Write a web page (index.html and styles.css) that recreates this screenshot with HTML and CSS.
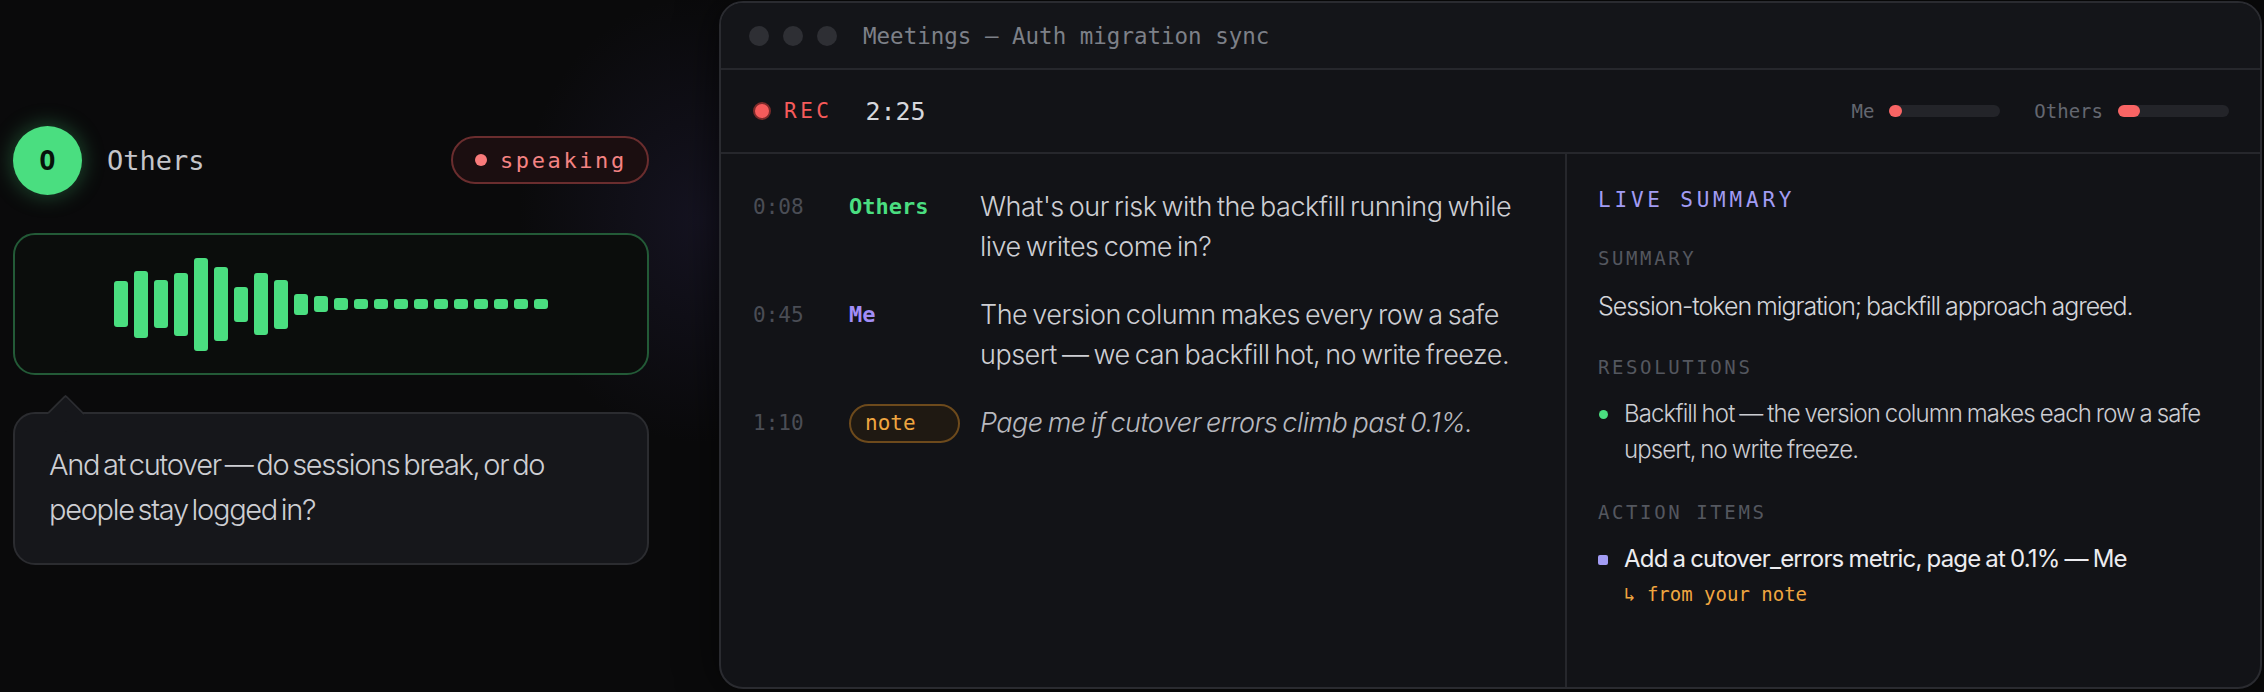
FILE: index.html
```html
<!DOCTYPE html>
<html lang="en">
<head>
    <meta charset="UTF-8">
    <meta name="viewport" content="width=device-width, initial-scale=1.0">
    <link rel="stylesheet" href="styles.css">
    <title>Meetings — Auth migration sync</title>
</head>
<body>
    <div class="stage">
        <section class="caller">
            <div class="caller-head">
                <div class="avatar">O</div>
                <span class="caller-name">Others</span>
                <span class="speaking"><i class="speaking-dot"></i>speaking</span>
            </div>

            <div class="wave">
                <span class="bar" style="height:46px"></span>
                <span class="bar" style="height:67px"></span>
                <span class="bar" style="height:48px"></span>
                <span class="bar" style="height:63px"></span>
                <span class="bar" style="height:93px"></span>
                <span class="bar" style="height:74px"></span>
                <span class="bar" style="height:35px"></span>
                <span class="bar" style="height:62px"></span>
                <span class="bar" style="height:49px"></span>
                <span class="bar" style="height:21px"></span>
                <span class="bar" style="height:16px"></span>
                <span class="bar" style="height:12px"></span>
                <span class="bar" style="height:10px"></span>
                <span class="bar" style="height:10px"></span>
                <span class="bar" style="height:10px"></span>
                <span class="bar" style="height:10px"></span>
                <span class="bar" style="height:10px"></span>
                <span class="bar" style="height:10px"></span>
                <span class="bar" style="height:10px"></span>
                <span class="bar" style="height:10px"></span>
                <span class="bar" style="height:10px"></span>
                <span class="bar" style="height:10px"></span>
            </div>

            <div class="bubble">
                And at cutover — do sessions break, or do people stay logged in?
            </div>
        </section>

        <section class="window">
            <div class="titlebar">
                <span class="light"></span>
                <span class="light"></span>
                <span class="light"></span>
                <span class="title">Meetings — Auth migration sync</span>
            </div>

            <div class="recbar">
                <span class="rec-dot"></span>
                <span class="rec">REC</span>
                <span class="clock">2:25</span>

                <div class="meters">
                    <span class="meter-label">Me</span>
                    <span class="meter"><span class="meter-fill" style="width:13px"></span></span>
                    <span class="meter-label">Others</span>
                    <span class="meter"><span class="meter-fill" style="width:22px"></span></span>
                </div>
            </div>

            <div class="panes">
                <div class="transcript">
                    <div class="line">
                        <span class="time">0:08</span>
                        <span class="who others">Others</span>
                        <p class="said">What's our risk with the backfill running while live writes come in?</p>
                    </div>
                    <div class="line">
                        <span class="time">0:45</span>
                        <span class="who me">Me</span>
                        <p class="said">The version column makes every row a safe upsert — we can backfill hot, no write freeze.</p>
                    </div>
                    <div class="line">
                        <span class="time">1:10</span>
                        <span class="who"><span class="note-tag">note</span></span>
                        <p class="said note">Page me if cutover errors climb past 0.1%.</p>
                    </div>
                </div>

                <aside class="summary">
                    <h2 class="live">LIVE SUMMARY</h2>

                    <h3 class="label">SUMMARY</h3>
                    <p class="summary-text">Session-token migration; backfill approach agreed.</p>

                    <h3 class="label">RESOLUTIONS</h3>
                    <ul class="items">
                        <li class="item"><i class="dot green"></i>Backfill hot — the version column makes each row a safe upsert, no write freeze.</li>
                    </ul>

                    <h3 class="label actions">ACTION ITEMS</h3>
                    <ul class="items">
                        <li class="item action"><i class="dot square"></i>Add a cutover_errors metric, page at 0.1% — Me</li>
                    </ul>
                    <div class="from-note">↳ from your note</div>
                </aside>
            </div>
        </section>
    </div>
</body>
</html>
```

FILE: styles.css
```css
*{
    box-sizing: border-box;
}

:root{
    --mono: "DejaVu Sans Mono", "Liberation Mono", monospace;
    --sans: Inter, "Noto Sans", sans-serif;
    --green: #4ade80;
    --red: #f65b5b;
    --violet: #a29cf4;
    --orange: #f0a640;
    --line: #26272c;
    --panel: #121317;
}

body{
    margin: 0;
    width: 2264px;
    height: 692px;
    overflow: hidden;
    background-color: #0a0a0b;
    background-image: radial-gradient(ellipse 260px 320px at 700px 220px, rgba(70, 60, 130, 0.18), transparent 70%);
    font-family: var(--sans);
}

.stage{
    display: flex;
    align-items: center;
    height: 692px;
    padding: 1px 2px 3px 13px;
    gap: 70px;
}

/* caller card */

.caller{
    width: 636px;
    flex-shrink: 0;
}

.caller-head{
    display: flex;
    align-items: center;
    height: 70px;
}

.avatar{
    width: 69px;
    height: 69px;
    border-radius: 50%;
    background-color: var(--green);
    box-shadow: 0 0 22px rgba(74, 222, 128, 0.35);
    display: flex;
    align-items: center;
    justify-content: center;
    font-family: var(--mono);
    font-size: 27px;
    font-weight: bold;
    color: #07120b;
}

.caller-name{
    margin-left: 25px;
    font-family: var(--mono);
    font-size: 27px;
    color: #c4c5ca;
}

.speaking{
    margin-left: auto;
    height: 48px;
    width: 198px;
    border: 2px solid #6a2d2e;
    border-radius: 24px;
    background-color: #1b0e10;
    display: flex;
    align-items: center;
    padding-left: 22px;
    font-family: var(--mono);
    font-size: 22px;
    letter-spacing: 2.6px;
    color: #f48383;
}

.speaking-dot{
    width: 12px;
    height: 12px;
    border-radius: 50%;
    background-color: #f87a7a;
    margin-right: 13px;
}

.wave{
    margin-top: 38px;
    height: 142px;
    border: 2px solid #235a37;
    border-radius: 22px;
    background-color: #0b0d0c;
    display: flex;
    align-items: center;
    justify-content: center;
    gap: 6px;
}

.bar{
    width: 14px;
    border-radius: 3px;
    background-color: var(--green);
}

.bubble{
    position: relative;
    margin-top: 37px;
    height: 153px;
    border: 2px solid #2b2c30;
    border-radius: 22px;
    background-color: #16171b;
    padding: 0 30px 4px 34px;
    display: flex;
    align-items: center;
    font-size: 29px;
    font-weight: 300;
    line-height: 45px;
    letter-spacing: -1.3px;
    word-spacing: -3px;
    color: #cdced3;
}

/* little pointer on top of the bubble */
.bubble::before{
    content: "";
    position: absolute;
    left: 38px;
    top: -18px;
    width: 24px;
    height: 24px;
    background-color: #16171b;
    border-left: 2px solid #2b2c30;
    border-top: 2px solid #2b2c30;
    transform: translateY(4px) rotate(45deg) scaleX(1.05);
    border-top-left-radius: 3px;
}

/* meeting window */

.window{
    flex: 1;
    height: 688px;
    background-color: var(--panel);
    border: 2px solid #2a2b30;
    border-radius: 24px;
    overflow: hidden;
    display: flex;
    flex-direction: column;
    box-shadow: 0 0 40px rgba(0, 0, 0, 0.6);
}

.titlebar{
    height: 67px;
    flex-shrink: 0;
    display: flex;
    align-items: center;
    padding-left: 28px;
    border-bottom: 2px solid var(--line);
    background-color: #141519;
}

.light{
    width: 20px;
    height: 20px;
    border-radius: 50%;
    background-color: #2e2f34;
    margin-right: 14px;
}

.title{
    margin-left: 12px;
    font-family: var(--mono);
    font-size: 22.5px;
    color: #7d8088;
}

.recbar{
    height: 84px;
    flex-shrink: 0;
    display: flex;
    align-items: center;
    padding: 0 31px 0 32px;
    border-bottom: 2px solid var(--line);
}

.rec-dot{
    width: 18px;
    height: 18px;
    border-radius: 50%;
    background-color: var(--red);
    border: 2px solid #7c2a2a;
    margin-right: 13px;
}

.rec{
    font-family: var(--mono);
    font-size: 21px;
    letter-spacing: 3.5px;
    color: var(--red);
}

.clock{
    margin-left: 33px;
    font-family: var(--mono);
    font-size: 25px;
    color: #d6d7db;
}

.meters{
    margin-left: auto;
    display: flex;
    align-items: center;
}

.meter-label{
    font-family: var(--mono);
    font-size: 19px;
    color: #646770;
    margin-right: 15px;
}

.meter{
    width: 111px;
    height: 12px;
    border-radius: 6px;
    background-color: #232429;
    margin-right: 34px;
    display: flex;
}

.meter:last-child{
    margin-right: 0;
}

.meter-fill{
    height: 12px;
    border-radius: 6px;
    background-color: #f86464;
}

.panes{
    flex: 1;
    display: flex;
}

.transcript{
    width: 846px;
    flex-shrink: 0;
    border-right: 2px solid var(--line);
    padding: 33px 30px 0 32px;
}

.line{
    display: flex;
    align-items: flex-start;
    margin-bottom: 28px;
}

.time{
    width: 96px;
    flex-shrink: 0;
    font-family: var(--mono);
    font-size: 21px;
    line-height: 40px;
    color: #4a4d55;
}

.who{
    width: 131px;
    flex-shrink: 0;
    font-family: var(--mono);
    font-size: 22px;
    font-weight: 600;
    line-height: 40px;
}

.who.others{
    color: var(--green);
}

.who.me{
    color: #a28ef7;
}

.note-tag{
    display: inline-block;
    width: 111px;
    height: 39px;
    border: 2px solid #6d4a1c;
    border-radius: 20px;
    background-color: #1f1912;
    padding-left: 14px;
    margin-top: 1px;
    font-size: 21px;
    font-weight: normal;
    line-height: 35px;
    color: var(--orange);
}

.said{
    margin: 0;
    max-width: 552px;
    font-size: 27px;
    font-weight: 300;
    line-height: 40px;
    letter-spacing: -0.5px;
    word-spacing: -2px;
    color: #cdced3;
}

.said.note{
    font-style: italic;
    color: #b8b9bf;
}

.summary{
    flex: 1;
    padding: 34px 30px 0 31px;
}

.live{
    margin: 0;
    font-family: var(--mono);
    font-size: 21px;
    font-weight: normal;
    letter-spacing: 3.8px;
    color: var(--violet);
}

.label{
    margin: 35px 0 0;
    font-family: var(--mono);
    font-size: 19px;
    font-weight: normal;
    letter-spacing: 2.6px;
    color: #54575f;
}

.label.actions{
    margin-top: 33px;
}

.summary-text{
    margin: 22px 0 0;
    font-size: 25px;
    font-weight: 300;
    letter-spacing: -1.05px;
    word-spacing: -1px;
    color: #d4d5da;
}

.items{
    list-style: none;
    margin: 18px 0 0;
    padding: 0;
}

.item{
    display: flex;
    align-items: flex-start;
    max-width: 640px;
    font-size: 24px;
    font-weight: 300;
    line-height: 36px;
    letter-spacing: -0.9px;
    word-spacing: -1px;
    color: #cbccd1;
}

.item.action{
    letter-spacing: -0.8px;
    font-weight: 400;
    color: #ececf0;
}

.dot{
    flex-shrink: 0;
    width: 9px;
    height: 9px;
    border-radius: 50%;
    margin: 14px 16px 0 1px;
}

.dot.green{
    background-color: var(--green);
}

.dot.square{
    border-radius: 2px;
    margin-left: 0;
    margin-right: 16px;
    width: 10px;
    height: 10px;
    background-color: var(--violet);
}

.from-note{
    margin: 6px 0 0 26px;
    font-family: var(--mono);
    font-size: 19px;
    color: var(--orange);
}
```
